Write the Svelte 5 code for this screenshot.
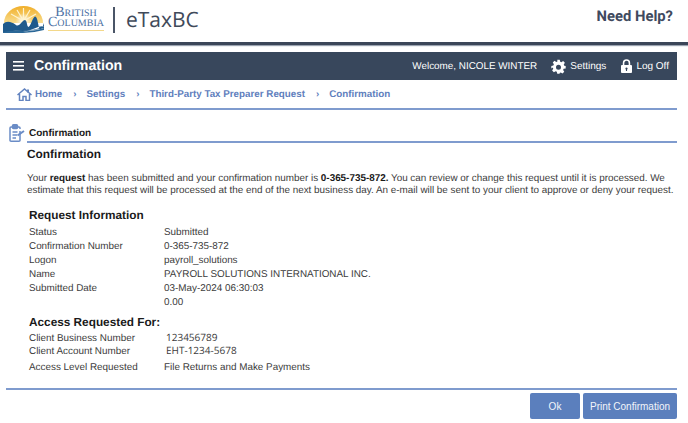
<script>
  const info = [
    ['Status', 'Submitted'],
    ['Confirmation Number', '0-365-735-872'],
    ['Logon', 'payroll_solutions'],
    ['Name', 'PAYROLL SOLUTIONS INTERNATIONAL INC.'],
    ['Submitted Date', '03-May-2024 06:30:03'],
    ['', '0.00']
  ];
  const crumbs = ['Settings', 'Third-Party Tax Preparer Request', 'Confirmation'];
</script>

<div class="page">
  <header class="top">
    <div class="brand">
      <svg class="logo" width="41" height="27" viewBox="0 0 41 27">
        <defs>
          <linearGradient id="sun" x1="0" y1="0" x2="0" y2="1">
            <stop offset="0" stop-color="#f0ae28" />
            <stop offset="1" stop-color="#f9dd8e" />
          </linearGradient>
          <radialGradient id="glow" cx="0.5" cy="0.5" r="0.5">
            <stop offset="0" stop-color="#fff" />
            <stop offset="1" stop-color="#fff" stop-opacity="0" />
          </radialGradient>
        </defs>
        <path d="M1 17A19.500 17 0 0 1 40 17Z" fill="url(#sun)" />
        <circle cx="20.500" cy="15" r="8" fill="url(#glow)" />
        <path d="M20.500 15L14 4M20.500 15L20.500 2M20.500 15L27 4M20.500 15L8 8M20.500 15L33 8" stroke="#fdf3cf" stroke-width="1.200" />
        <path d="M0 18Q3 15 7 16T13 19T19 16T24 18T29 15T35 17T41 17V20Q36 20 30 23T20 24T10 25T0 26Z" fill="#1f5a8c" />
        <path d="M0 26Q10 24 20 25T41 22V24Q30 27 20 27H0Z" fill="#2a6797" />
        <path d="M0 20Q10 20 20 23T41 20V22Q30 25 20 25T0 24Z" fill="#1f5a8c" />
      </svg>
      <div class="bc">
        <span>British</span>
        <span class="bc2">Columbia</span>
      </div>
      <span class="sep"></span>
      <span class="etax">eTaxBC</span>
    </div>
    <span class="help">Need Help?</span>
  </header>

  <div class="bar">
    <div class="bar-left">
      <svg width="12" height="10" viewBox="0 0 12 10" fill="#fff">
        <rect y="0" width="11" height="1.6" /><rect y="4" width="11" height="1.6" /><rect y="8" width="11" height="1.6" />
      </svg>
      <span class="bar-title">Confirmation</span>
    </div>
    <div class="bar-right">
      <span class="welcome">Welcome, NICOLE WINTER</span>
      <span class="tool">
        <svg width="15" height="15" viewBox="0 0 24 24" fill="#fff">
          <path fill-rule="evenodd" d="M10 1h4l.7 3.2 1.9.8 2.8-1.8 2.8 2.8-1.8 2.8.8 1.9L23.5 11v4l-3.3.7-.8 1.900 1.800 2.800-2.800 2.800-2.800-1.800-1.900.8L14 23.500h-4l-.7-3.300-1.900-.8-2.800 1.800-2.800-2.800 1.800-2.800-.8-1.900L.5 15v-4l3.300-.7.8-1.900L2.800 5.600l2.800-2.800 2.800 1.800 1.900-.8ZM12 9a4 4 0 1 0 0 8 4 4 0 0 0 0-8Z" />
        </svg>
        Settings
      </span>
      <span class="tool">
        <svg width="11" height="14" viewBox="0 0 12 15" fill="#fff">
          <path fill-rule="evenodd" d="M1 6.500h10a1 1 0 0 1 1 1V14a1 1 0 0 1-1 1H1a1 1 0 0 1-1-1V7.500a1 1 0 0 1 1-1ZM6 9a1.300 1.300 0 0 0-.6 2.400V13h1.200v-1.600A1.300 1.300 0 0 0 6 9Z" />
          <path d="M2.800 7V4.200a3.200 3.200 0 0 1 6.400 0V7" fill="none" stroke="#fff" stroke-width="1.700" />
        </svg>
        Log Off
      </span>
    </div>
  </div>

  <nav class="crumbs">
    <svg width="15" height="13" viewBox="0 0 15 13" fill="none" stroke="#6384c0" stroke-width="1.500">
      <path d="M0.500 7L7.500 1L14.500 7M2.500 6V12.500H6V8.500H9V12.500H12.500V6" />
      <path d="M11 1.500V4.500" stroke-width="2" />
    </svg>
    <a href="#home">Home</a>
    {#each crumbs as c}
      <span class="chev">›</span>
      <a href="#crumb">{c}</a>
    {/each}
  </nav>

  <main class="main">
    <div class="section-head">
      <svg width="16" height="18" viewBox="0 0 16 18" fill="none" stroke="#6a8cc6" stroke-width="1.500">
        <path d="M11 7V16.500Q11 17.200 10 17.200H2Q1 17.200 1 16.500V4Q1 3 2 3H10Q11 3 11 4V5" />
        <rect x="3.500" y="0.800" width="5" height="3.800" rx="1" fill="#6a8cc6" />
        <path d="M3.500 8H8.500M3.500 11H8M3.500 14H7" />
        <path d="M8.500 11.500L15 7" stroke-width="2" />
      </svg>
      <h2>Confirmation</h2>
    </div>

    <div class="body">
      <h1>Confirmation</h1>
      <p class="msg">Your <b>request</b> has been submitted and your confirmation number is <b>0-365-735-872.</b> You can review or change this request until it is processed. We<br />estimate that this request will be processed at the end of the next business day. An e-mail will be sent to your client to approve or deny your request.</p>

      <h3>Request Information</h3>
      <dl class="rows">
        {#each info as [k, v]}
          <dt>{k}</dt><dd>{v}</dd>
        {/each}
      </dl>

      <h3 class="second">Access Requested For:</h3>
      <dl class="rows access">
        <dt>Client Business Number</dt><dd class="typed">123456789</dd>
        <dt>Client Account Number</dt><dd class="typed">EHT-1234-5678</dd>
        <dt>Access Level Requested</dt><dd>File Returns and Make Payments</dd>
      </dl>
    </div>
  </main>

  <footer class="actions">
    <button class="ok">Ok</button>
    <button class="print">Print Confirmation</button>
  </footer>
</div>

<style>
  :global(body) { margin: 0; background: #fff; }
  .page {
    width: 688px; height: 423px; overflow: hidden; box-sizing: border-box;
    font-family: "Liberation Sans", Arial, sans-serif; font-size: 9.900px; color: #3c3c3c;
    text-rendering: geometricPrecision;
  }
  .top {
    box-sizing: border-box; padding: 0 15px 0 3px; height: 45px;
    display: flex; justify-content: space-between; align-items: center;
    border-bottom: 3px solid #3b4658; box-shadow: 0 1px 1px #9aa3b0;
  }
  .brand { display: flex; align-items: center; margin-top: -3px; }
  .bc { display: flex; flex-direction: column; align-items: center; width: 60px; margin-left: 2px; font-family: "Liberation Serif", serif; color: #4a6fa3; font-variant: small-caps; line-height: 10px; font-size: 14px; }
  .bc2 { border-bottom: 1px solid #f3d88a; padding: 0 0 2px; }
  .sep { width: 2px; height: 26px; background: #4a5567; margin: 0 11px 0 7px; }
  .etax { font-family: "Open Sans", sans-serif; font-size: 21px; color: #3f4a5a; }
  .help { font-family: Roboto, sans-serif; font-weight: 700; font-size: 14.800px; color: #3f4a5e; margin-top: -10px; }

  .bar {
    margin: 7px 11px 0 6px; height: 28px; background: #38475c; color: #fff;
    display: flex; justify-content: space-between; align-items: center; padding: 0 8px 0 7px;
  }
  .bar-left { display: flex; align-items: center; gap: 9px; }
  .bar-title { font-weight: 700; font-size: 14.200px; }
  .bar-right { display: flex; align-items: center; gap: 15px; font-size: 10px; }
  .welcome { font-size: 9.900px; margin-right: -1px; }
  .tool { display: flex; align-items: center; gap: 4px; }

  .crumbs {
    margin: 0 11px 0 6px; height: 30px; box-sizing: border-box; padding-left: 11px;
    display: flex; align-items: center; border-bottom: 2px solid #7f9bce;
    font-weight: 700; color: #5f80bd; font-size: 9.800px;
  }
  .crumbs a { color: #5f80bd; text-decoration: none; margin-left: 3px; }
  .chev { margin: 0 10px 0 11px; }
  .crumbs .chev + a { margin-left: 0; }

  .main { margin: 13px 11px 0 6px; }
  .section-head { display: flex; align-items: flex-end; margin-left: 3px; height: 20px; }
  .section-head svg { margin-bottom: 1px; }
  .section-head h2 {
    flex: 1; margin: 0 0 0 2px; padding: 0 0 2px 2px; font-size: 10px; color: #1a1a1a; font-weight: 700;
    border-bottom: 2px solid #7f9bce;
  }
  .body { padding-left: 21px; }
  h1 { margin: 3px 0 0; font-size: 11.900px; color: #1a1a1a; font-weight: 700; line-height: 16px; }
  .msg { margin: 11px 0 0; line-height: 12px; white-space: nowrap; }
  .msg b { color: #1a1a1a; }
  h3 { margin: 11px 0 0 2px; font-size: 11.800px; color: #1a1a1a; font-weight: 700; line-height: 15px; }
  h3.second { margin-top: 5px; }
  dl { margin: 3px 0 0 2px; display: grid; grid-template-columns: 135px 1fr; grid-auto-rows: 14px; line-height: 14px; }
  dt, dd { margin: 0; }
  .access { grid-template-rows: 13px 16px 14px; margin-top: 2px; }
  .typed { font-family: "Open Sans", sans-serif; padding-left: 2px; font-size: 10px; margin-top: -2px; }

  .actions {
    margin: 13px 11px 0 6px; padding-top: 3px; border-top: 2px solid #7f9bce;
    display: flex; justify-content: flex-end; gap: 3px;
  }
  button {
    height: 26px; border: 0; border-radius: 2px; background: #5b7fbd; color: #f2f5fa;
    font: 10px "Liberation Sans", Arial, sans-serif; padding: 0;
  }
  .ok { width: 50px; }
  .print { width: 94px; }
</style>
